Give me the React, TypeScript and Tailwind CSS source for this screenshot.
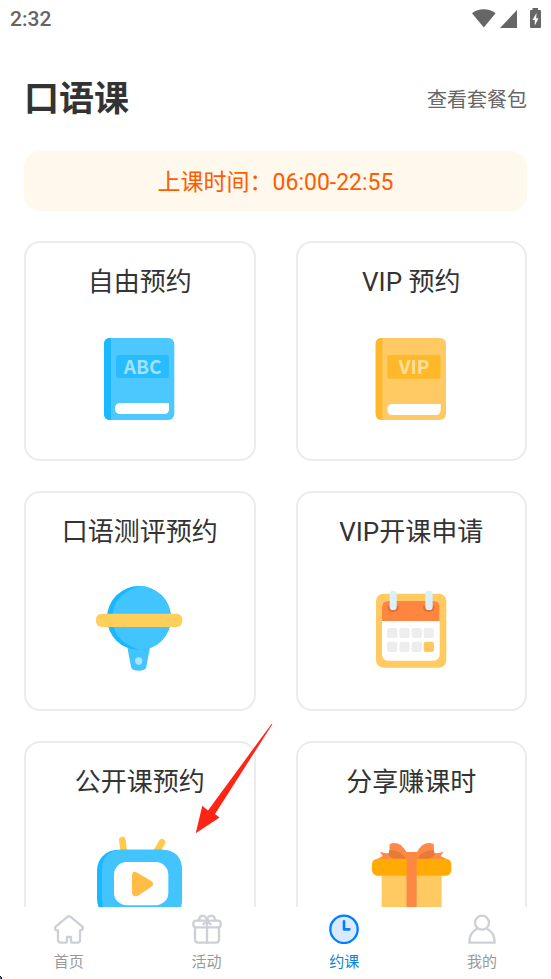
import type { ReactNode } from "react";

const cards = [
  { title: "自由预约", icon: <BlueBook /> },
  { title: "VIP 预约", icon: <VipBook /> },
  { title: "口语测评预约", icon: <Globe /> },
  { title: "VIP开课申请", icon: <Calendar /> },
  { title: "公开课预约", icon: <Television /> },
  { title: "分享赚课时", icon: <GiftBox /> },
];

const tabs = [
  { label: "首页", icon: <HomeIcon />, active: false },
  { label: "活动", icon: <GiftIcon />, active: false },
  { label: "约课", icon: <ClockIcon />, active: true },
  { label: "我的", icon: <UserIcon />, active: false },
];

export default function App() {
  return (
    <div className="relative flex h-screen flex-col overflow-hidden bg-white font-['Roboto','Noto_Sans_CJK_SC',sans-serif] text-[#333]">
      <StatusBar />

      <main className="min-h-0 flex-1 overflow-y-auto px-6 [scrollbar-width:none]">
        <header className="flex items-center justify-between pt-[38px]">
          <h1 className="text-[35px] font-bold leading-[48px]">口语课</h1>
          <a href="#packages" className="text-[20px] leading-[48px] text-[#666]">
            查看套餐包
          </a>
        </header>

        <p className="mt-[27px] rounded-2xl bg-[#fff8ec] pt-1 text-center text-[23px] leading-[56px] text-[#ff5c00]">
          上课时间：06:00-22:55
        </p>

        <div className="mt-[30px] grid grid-cols-2 gap-x-10 gap-y-[30px] pb-[30px]">
          {cards.map((card) => (
            <button
              key={card.title}
              type="button"
              className="flex cursor-pointer flex-col items-center rounded-2xl border-2 border-[#ebebeb] bg-white pt-[19px] pb-[29px]"
            >
              <span className="text-[26px] leading-10">{card.title}</span>
              <span className="mt-7 block size-[100px]">{card.icon}</span>
            </button>
          ))}
        </div>
      </main>

      <nav className="grid grid-cols-4 bg-white pt-[7px] pb-[7px]">
        {tabs.map((tab) => (
          <a
            key={tab.label}
            href={`#${tab.label}`}
            aria-current={tab.active ? "page" : undefined}
            className={`flex flex-col items-center gap-2 text-[15px] leading-5 ${
              tab.active ? "text-[#0a84e0]" : "text-[#999]"
            }`}
          >
            {tab.icon}
            {tab.label}
          </a>
        ))}
      </nav>

      {/* Pointer to the open class card */}
      <svg
        className="pointer-events-none absolute left-[190px] top-[720px] h-[120px] w-[90px]"
        viewBox="0 0 90 120"
        aria-hidden="true"
      >
        <path d="M82.5 4 L25 94 L29.5 97.5 L5.7 113.2 L12.3 85.8 L18 90.5 L81.5 4 Z" fill="#ff2414" />
      </svg>

      <svg
        className="pointer-events-none absolute bottom-0 left-0 size-[3px]"
        viewBox="0 0 3 3"
        aria-hidden="true"
      >
        <path d="M0 0 H1 V1 H2 V3 H0 Z" fill="#111" />
        <path d="M0 1 H1 V3 H0 Z" fill="#0a84c0" />
      </svg>
    </div>
  );
}

function StatusBar() {
  return (
    <div className="flex h-[38px] shrink-0 items-center justify-between px-[10px] text-[#666]">
      <span className="text-[21px] font-medium leading-[38px]">2:32</span>
      <svg width="70" height="22" viewBox="0 0 70 22" fill="currentColor" aria-hidden="true">
        <path d="M1 5.2 C7.5 0 18 0 24.6 5.2 L12.8 19.4 Z" />
        <path d="M46 2 V20 H29 Z" />
        <path d="M61.5 0 H67 V2 H69 Q70 2 70 3 V19 Q70 20 69 20 H60 Q59 20 59 19 V3 Q59 2 60 2 H61.5 Z" />
        <path d="M65.5 5 L61.5 12 H63.8 V17.5 L67.5 10.2 H65.2 Z" fill="#fff" />
      </svg>
    </div>
  );
}

function CardArt({ viewBox, children }: { viewBox: string; children: ReactNode }) {
  return (
    <svg width="100" height="100" viewBox={viewBox} aria-hidden="true">
      {children}
    </svg>
  );
}

function BlueBook() {
  return (
    <CardArt viewBox="30 30 300 300">
      <rect x="72" y="54" width="211" height="246" rx="18" fill="#4dc8ff" />
      <path d="M93 54 V300 H88 Q72 298 72 282 V72 Q72 56 88 54 Z" fill="#1cb8fd" />
      <rect x="108" y="105" width="159" height="69" rx="8" fill="#27bcff" />
      <text
        x="188"
        y="162"
        textAnchor="middle"
        className="font-['Noto_Sans_CJK_SC',sans-serif] text-[57px] font-bold"
        fill="#a0e2ff"
      >
        ABC
      </text>
      <path d="M121 249 H267 V267 Q267 282 252 282 H121 Q105 282 105 266 Q105 249 121 249 Z" fill="#fff" />
    </CardArt>
  );
}

function VipBook() {
  return (
    <CardArt viewBox="34 30 300 300">
      <rect x="78" y="54" width="211" height="246" rx="18" fill="#ffc963" />
      <path d="M98 54 V300 H94 Q78 298 78 282 V72 Q78 56 94 54 Z" fill="#ffb72c" />
      <rect x="113" y="105" width="160" height="71" rx="8" fill="#ffb829" />
      <text
        x="193"
        y="163"
        textAnchor="middle"
        className="font-['Noto_Sans_CJK_SC',sans-serif] text-[57px] font-bold"
        fill="#ffe09b"
      >
        VIP
      </text>
      <path d="M129 252 H273 V270 Q273 285 258 285 H129 Q113 285 113 269 Q113 252 129 252 Z" fill="#fff" />
    </CardArt>
  );
}

function Globe() {
  return (
    <CardArt viewBox="30 30 300 300">
      <path d="M142 232 H210 L199 290 Q198 297 192 299 Q176 305 160 299 Q154 297 153 290 Z" fill="#42c5ff" />
      <circle cx="177" cy="144" r="96" fill="#16b8ff" />
      <path d="M177 48 A96 96 0 0 1 177 240 Q97 212 97 144 Q98 72 177 50 Z" fill="#42c5ff" />
      <rect x="48" y="131" width="259" height="40" rx="17" fill="#ffcf5c" />
      <circle cx="176" cy="273" r="11" fill="#a9e4ff" />
    </CardArt>
  );
}

function Calendar() {
  const columns = [112, 149, 186, 222];
  return (
    <CardArt viewBox="34 30 300 300">
      <rect x="79" y="71" width="211" height="222" rx="22" fill="#ffca62" />
      <rect x="97" y="93" width="173" height="179" rx="18" fill="#fff" />
      <path d="M97 153 V111 Q97 93 115 93 H252 Q270 93 270 111 V153 Z" fill="#ff8640" />
      <path d="M113 107 H148 Q148 126 130 126 Q113 126 113 107 Z" fill="#e36f30" />
      <path d="M220 107 H255 Q255 126 237 126 Q220 126 220 107 Z" fill="#e36f30" />
      <rect x="120" y="62" width="21" height="58" rx="10" fill="#daf1fc" />
      <rect x="227" y="62" width="22" height="58" rx="10" fill="#daf1fc" />
      {columns.map((x) => (
        <rect key={x} x={x} y="174" width="31" height="30" rx="7" fill="#ededed" />
      ))}
      {columns.map((x) => (
        <rect key={x} x={x} y="215" width="31" height="31" rx="7" fill={x === 222 ? "#ffc75c" : "#ededed"} />
      ))}
    </CardArt>
  );
}

function Television() {
  return (
    <CardArt viewBox="30 345 300 300">
      <path d="M127 375 L131 408" stroke="#ffca4b" strokeWidth="20" strokeLinecap="round" />
      <path d="M246 382 L231 408" stroke="#ffca4b" strokeWidth="20" strokeLinecap="round" />
      <rect x="51" y="404" width="255" height="210" rx="62" fill="#16b8ff" />
      <path d="M128 404 H244 Q306 404 306 466 V552 Q306 614 244 614 H128 Q66 614 66 552 V466 Q66 404 128 404 Z" fill="#42c5ff" />
      <rect x="102" y="441" width="163" height="130" rx="38" fill="#fff" />
      <path d="M156 482 Q156 465 172 473 L214 498 Q225 506 214 515 L174 542 Q156 548 156 530 Z" fill="#ffbd45" />
    </CardArt>
  );
}

function GiftBox() {
  return (
    <CardArt viewBox="34 30 300 300">
      <rect x="96" y="160" width="180" height="150" fill="#ffca62" />
      <path d="M83 117 L99 108 L91 95 Q108 102 121 98 L172 97 H200 L252 98 Q265 102 282 95 L273 108 L290 117 Z" fill="#ff8947" />
      <path d="M118 112 L120 72 Q150 60 171 97 V117 Z" fill="#ff8947" />
      <path d="M254 112 L252 72 Q222 60 201 97 V117 Z" fill="#ff8947" />
      <path d="M119 91 Q150 88 170 117 H134 Q120 111 117 104 Z" fill="#e57a3b" />
      <path d="M253 91 Q222 88 202 117 H238 Q252 111 255 104 Z" fill="#e57a3b" />
      <rect x="67" y="116" width="238" height="51" rx="16" fill="#ffab03" />
      <path d="M171 96 H201 V310 H171 Z" fill="#ff8744" />
      <path d="M168 167 H171 V310 H168 Z" fill="#f3ad59" />
    </CardArt>
  );
}

function TabIcon({ children }: { children: ReactNode }) {
  return (
    <svg
      width="30"
      height="30"
      viewBox="0 0 90 90"
      fill="none"
      stroke="#cdd0d6"
      strokeWidth="7"
      strokeLinecap="round"
      strokeLinejoin="round"
      aria-hidden="true"
    >
      {children}
    </svg>
  );
}

function HomeIcon() {
  return (
    <TabIcon>
      <path d="M41 8 Q45 5 49 8 L84 37 Q89 42 85 46 Q83 50 78 49 V78 Q78 86 70 86 H57 Q51 86 51 80 V69 H39 V80 Q39 86 33 86 H20 Q12 86 12 78 V49 Q7 50 4 46 Q1 42 6 37 Z" />
    </TabIcon>
  );
}

function GiftIcon() {
  return (
    <TabIcon>
      <rect x="4" y="20" width="82" height="20" rx="8" />
      <path d="M9 40 V76 Q9 86 19 86 H71 Q81 86 81 76 V40" />
      <path d="M45 20 V86 M45 20 Q43 5 31 5 Q22 6 21 18 M45 20 Q47 5 59 5 Q68 6 69 18" />
      <path d="M45 21 L34 31 M45 21 L56 31" />
    </TabIcon>
  );
}

function ClockIcon() {
  return (
    <TabIcon>
      <circle cx="45" cy="46" r="41" fill="#d9eaff" stroke="#0080ff" />
      <path d="M45 22 V46 H61" stroke="#0080ff" strokeWidth="8" />
    </TabIcon>
  );
}

function UserIcon() {
  return (
    <TabIcon>
      <circle cx="45" cy="26" r="21" />
      <path d="M30 44 Q7 56 7 86 H83 Q83 56 60 44" />
    </TabIcon>
  );
}
